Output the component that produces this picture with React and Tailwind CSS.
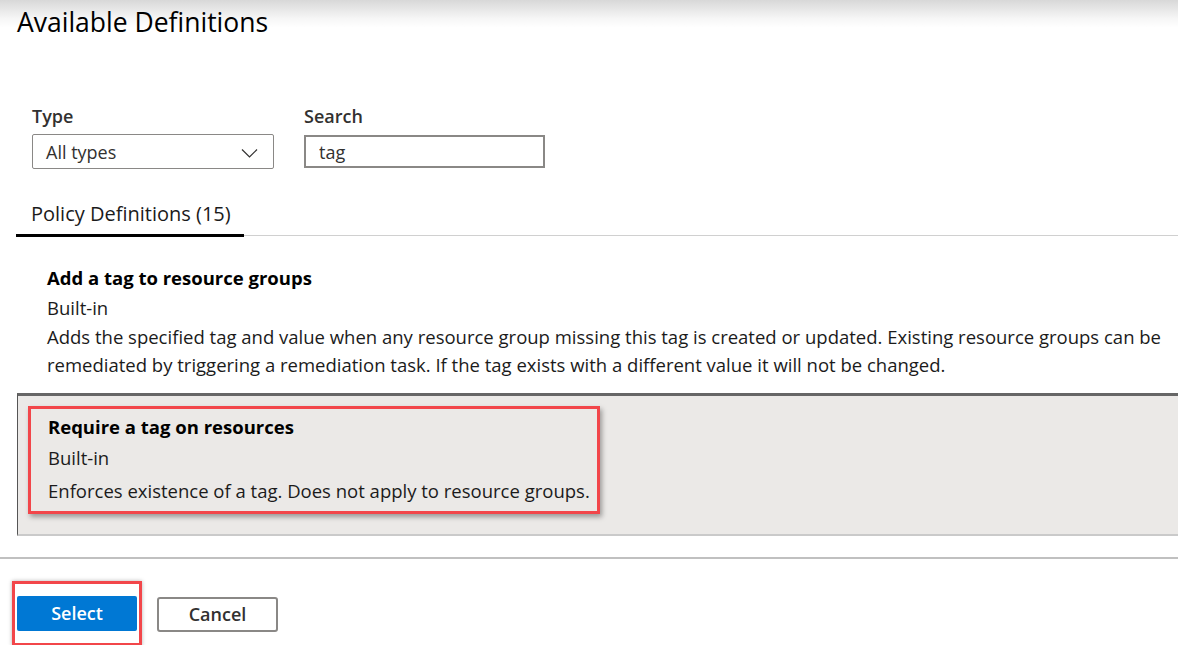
import React, { useState } from 'react';

const definitions = [
  {
    id: 1,
    name: "Add a tag to resource groups",
    kind: "Built-in",
    description:
      "Adds the specified tag and value when any resource group missing this tag is created or updated. Existing resource groups can be remediated by triggering a remediation task. If the tag exists with a different value it will not be changed.",
  },
  {
    id: 2,
    name: "Require a tag on resources",
    kind: "Built-in",
    description: "Enforces existence of a tag. Does not apply to resource groups.",
  },
];

const App = () => {
  const [search, setSearch] = useState("tag");
  const selectedId = 2;

  return (
    <div className="w-[1178px] h-[645px] overflow-hidden bg-white text-[#1b1b1b] font-['Open_Sans',sans-serif] flex flex-col">
      {/* Header with top shade */}
      <div className="h-[46px] shrink-0 bg-gradient-to-b from-[#d8d8d8] via-[#f6f6f6] via-40% to-white to-60% pl-[17px] pt-[3px]">
        <h1 className="text-[26.5px] leading-[38px] text-black">Available Definitions</h1>
      </div>

      {/* Filters */}
      <div className="flex gap-[30px] pl-[32px] mt-[58px] shrink-0">
        <div className="flex flex-col">
          <label className="text-[18px] leading-[24px] font-semibold text-[#323130] mb-[6px]">Type</label>
          <div className="w-[242px] h-[35px] border border-[#8a8886] rounded-[2px] flex items-center justify-between pl-[13px] pr-[15px] pt-[2px]">
            <span className="text-[18px] text-[#323130]">All types</span>
            <svg width="17" height="10" viewBox="0 0 17 10" fill="none" stroke="#323130" strokeWidth="1.2">
              <path d="M1 1.5l7.5 7.5 7.5-7.5" />
            </svg>
          </div>
        </div>
        <div className="flex flex-col">
          <label className="text-[18px] leading-[24px] font-semibold text-[#323130] mb-[7px]">Search</label>
          <input
            className="w-[241px] h-[33px] border-2 border-[#8a8886] px-[13px] text-[18px] text-[#323130] outline-none"
            value={search}
            onChange={(e) => setSearch(e.target.value)}
          />
        </div>
      </div>

      {/* Tabs */}
      <div className="flex mt-[33px] ml-[16px] border-b border-[#d0d0d0] shrink-0">
        <div className="w-[228px] border-b-[3px] border-black -mb-[2px] pl-[15px] pb-[7px]">
          <span className="text-[20px] leading-[24px] text-[#1b1b1b]">Policy Definitions (15)</span>
        </div>
      </div>

      {/* List */}
      <div className="flex flex-col shrink-0">
        {definitions.map((d) =>
          d.id === selectedId ? (
            <div
              key={d.id}
              className="ml-[17px] h-[143px] bg-[#ebe9e7] border-t-[3px] border-l border-t-[#666] border-l-[#555] border-b-2 border-b-[#cacaca] pl-[10px] pt-[10px]"
            >
              <div className="w-[572px] border-[3px] border-[#f2464a] shadow-[2px_3px_5px_rgba(0,0,0,0.35)] pl-[17px] pt-[2px] pb-[3px]">
                <div className="text-[18.5px] leading-[31px] font-bold text-black">{d.name}</div>
                <div className="text-[18.5px] leading-[32px]">{d.kind}</div>
                <div className="text-[18.5px] leading-[34px] whitespace-nowrap">{d.description}</div>
              </div>
            </div>
          ) : (
            <div key={d.id} className="ml-[17px] pl-[30px] pr-[4px] pt-[27px] h-[157px]">
              <div className="text-[18.5px] leading-[30px] font-bold text-black">{d.name}</div>
              <div className="text-[18.5px] leading-[30px]">{d.kind}</div>
              <p className="text-[18.5px] leading-[28px]">{d.description}</p>
            </div>
          )
        )}
      </div>

      {/* Footer */}
      <div className="mt-[21px] border-t-2 border-[#c0c0c0] shrink-0">
        <div className="flex items-start pl-[12px] pt-[22px] gap-[15px]">
          <div className="border-[3px] border-[#f2464a] shadow-[0_0_4px_rgba(0,0,0,0.3)] px-[2px] pt-[12px] pb-[12px]">
            <button className="w-[120px] h-[35px] bg-[#0078d4] rounded-[2px] text-white text-[18px] font-semibold">
              Select
            </button>
          </div>
          <button className="mt-[16px] w-[121px] h-[35px] border-2 border-[#8a8886] rounded-[3px] bg-white text-[18px] font-semibold text-[#323130]">
            Cancel
          </button>
        </div>
      </div>
    </div>
  );
};

export default App;
